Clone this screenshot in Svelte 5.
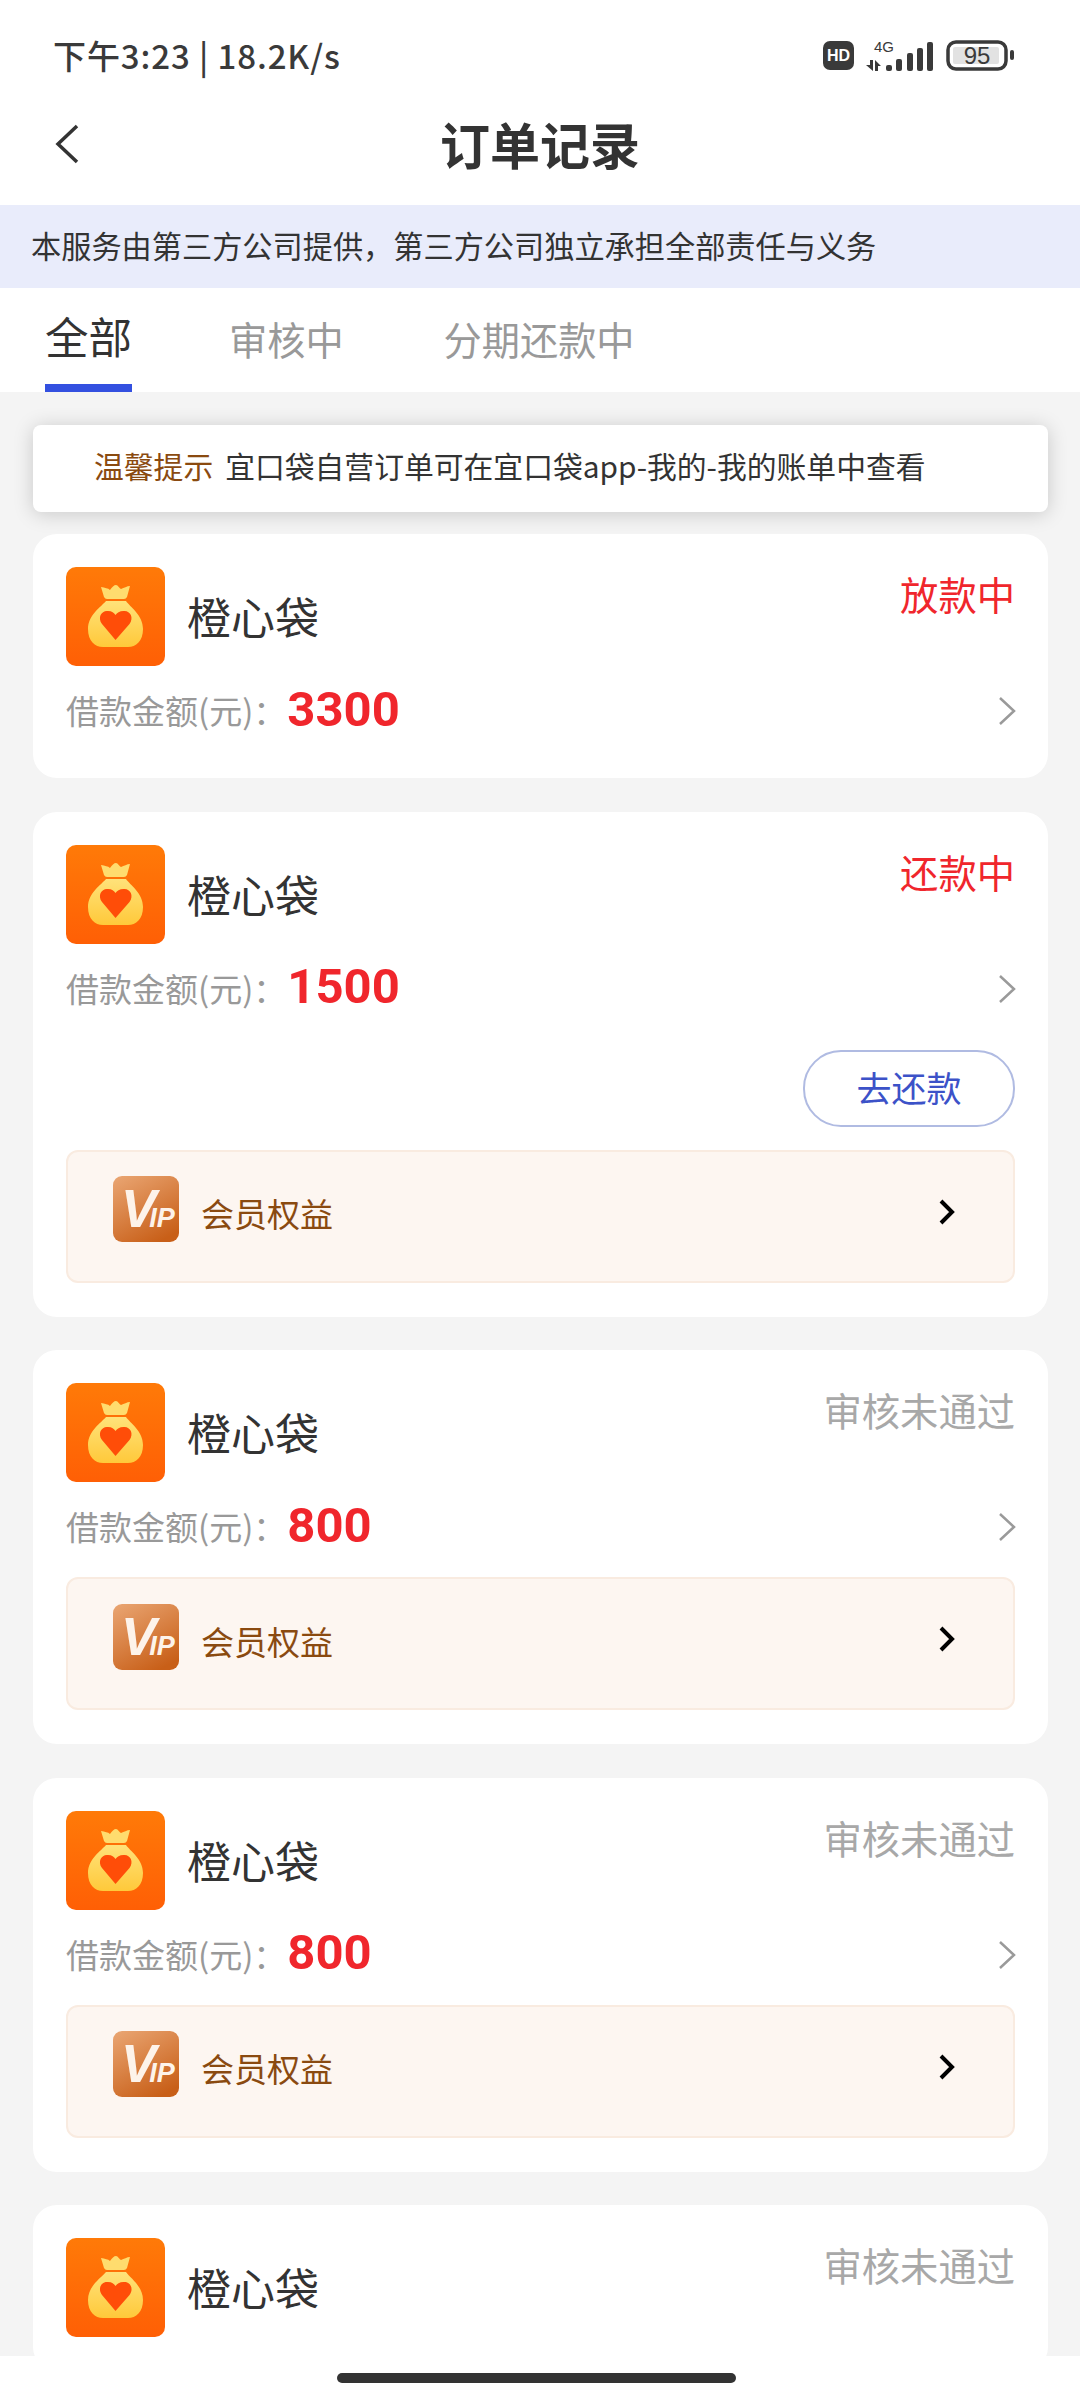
<script lang="ts">
  interface Order {
    status: string;
    amount?: string;
    pending: boolean;
    repay?: boolean;
    vip?: boolean;
  }

  const orders: Order[] = [
    { status: '放款中', amount: '3300', pending: true },
    { status: '还款中', amount: '1500', pending: true, repay: true, vip: true },
    { status: '审核未通过', amount: '800', pending: false, vip: true },
    { status: '审核未通过', amount: '800', pending: false, vip: true },
    { status: '审核未通过', pending: false },
  ];

  const tabs = ['全部', '审核中', '分期还款中'];
  const signalBars = [
    { x: 20, y: 26, h: 6 },
    { x: 30, y: 20, h: 12 },
    { x: 41, y: 14, h: 18 },
    { x: 51, y: 9, h: 23 },
    { x: 61, y: 3, h: 29 },
  ];
</script>

<div class="page">
  <header class="statusbar">
    <span class="clock">下午3:23 | 18.2K/s</span>
    <div class="status-icons">
      <svg width="31" height="29" viewBox="0 0 31 29">
        <rect width="31" height="29" rx="7" fill="#3a3a3a" />
        <text x="15.500" y="20" text-anchor="middle" class="hd">HD</text>
      </svg>
      <svg width="68" height="32" viewBox="0 0 68 32">
        <text x="18" y="13" text-anchor="middle" class="net">4G</text>
        <path d="M4 21h3v11L0 26h4zM9 21l6 6h-3v5H9z" fill="#3a3a3a" />
        {#each signalBars as b}
          <rect x={b.x} y={b.y} width="6" height={b.h} rx="2" fill="#3a3a3a" />
        {/each}
      </svg>
      <svg width="68" height="31" viewBox="0 0 68 31">
        <rect x="2" y="2" width="58" height="27" rx="8" fill="none" stroke="#3a3a3a" stroke-width="3.500" />
        <rect x="7" y="7" width="46" height="17" rx="2" fill="#e2e2e2" />
        <text x="31" y="24" text-anchor="middle" class="batt">95</text>
        <rect x="64" y="10" width="4" height="10" rx="2" fill="#3a3a3a" />
      </svg>
    </div>
  </header>

  <nav class="navbar">
    <svg class="back" width="26" height="40" viewBox="0 0 26 40">
      <path d="M23 2 4 20l19 18" fill="none" stroke="#333" stroke-width="3.500" />
    </svg>
    <h1>订单记录</h1>
  </nav>

  <div class="notice">本服务由第三方公司提供，第三方公司独立承担全部责任与义务</div>

  <div class="tabs">
    {#each tabs as tab, i}
      <div class="tab" class:active={i === 0}>{tab}</div>
    {/each}
  </div>

  <main class="list">
    <div class="tip">
      <span class="tip-label">温馨提示</span>
      <span>宜口袋自营订单可在宜口袋app-我的-我的账单中查看</span>
    </div>

    {#each orders as order}
      <section class="card">
        <div class="card-head">
          <svg class="logo" width="99" height="99" viewBox="0 0 99 99">
            <defs>
              <linearGradient id="logoBg" x1="0" y1="0" x2="0" y2="1">
                <stop offset="0" stop-color="#ff7a08" />
                <stop offset="1" stop-color="#ff5f05" />
              </linearGradient>
              <linearGradient id="bag" x1="0" y1="0" x2="0" y2="1">
                <stop offset="0" stop-color="#ffe27a" />
                <stop offset="1" stop-color="#ffc93a" />
              </linearGradient>
            </defs>
            <rect width="99" height="99" rx="10" fill="url(#logoBg)" />
            <path d="M35 20c4 1 7 1 9 3 2-3 4-5 6-5 2 0 3 3 5 4 3-1 6-3 9-3l-3 11q-1 2-3 2H41q-2 0-3-2z" fill="#ffdc6e" />
            <path d="M40 34h20c4 6 17 14 17 28 0 12-7 18-15 18H37c-8 0-15-6-15-18 0-14 13-22 18-28z" fill="url(#bag)" />
            <path d="M49.500 73 36 57c-5-7 0-14 6-13 4 0 6 2 7.500 4 1.500-2 4-4 8-4 6-1 11 6 6 13z" fill="#ff4d08" />
          </svg>
          <span class="name">橙心袋</span>
          <span class="status" class:pending={order.pending}>{order.status}</span>
        </div>

        {#if order.amount}
          <div class="amount-row">
            <span class="amount-label">借款金额(元)：</span>
            <span class="amount">{order.amount}</span>
            <svg class="more" width="20" height="30" viewBox="0 0 20 30">
              <path d="m3 2 14 13L3 28" fill="none" stroke="#9a9a9a" stroke-width="2.500" />
            </svg>
          </div>
        {/if}

        {#if order.repay}
          <div class="actions"><button class="repay">去还款</button></div>
        {/if}

        {#if order.vip}
          <div class="vip" class:after-button={order.repay}>
            <svg width="66" height="66" viewBox="0 0 66 66">
              <defs>
                <linearGradient id="vipBg" x1="0.150" y1="0" x2="0.700" y2="1">
                  <stop offset="0" stop-color="#e8a26e" />
                  <stop offset="1" stop-color="#c85f18" />
                </linearGradient>
              </defs>
              <rect width="66" height="66" rx="9" fill="url(#vipBg)" />
              <text x="8" y="51" class="vip-logo"><tspan class="vip-v">V</tspan><tspan dx="-7" class="vip-ip">IP</tspan></text>
            </svg>
            <span class="vip-text">会员权益</span>
            <svg class="vip-more" width="18" height="26" viewBox="0 0 18 26">
              <path d="m3 2 11 11L3 24" fill="none" stroke="#000" stroke-width="4" />
            </svg>
          </div>
        {/if}
      </section>
    {/each}
  </main>

  <footer class="homebar"><div class="handle"></div></footer>
</div>

<style>
  :global(body) {
    margin: 0;
  }
  .page {
    width: 1080px;
    height: 2400px;
    display: flex;
    flex-direction: column;
    overflow: hidden;
    background: #fff;
    font-family: "Noto Sans CJK SC", "Noto Sans", sans-serif;
    color: #333;
  }
  .statusbar {
    height: 90px;
    flex: none;
    display: flex;
    align-items: center;
    justify-content: space-between;
    padding: 20px 66px 0 53px;
    box-sizing: border-box;
  }
  .clock {
    font-size: 33px;
    font-weight: 500;
    color: #3a3a3a;
    letter-spacing: 0.900px;
  }
  .status-icons {
    display: flex;
    align-items: center;
    gap: 12px;
  }
  .hd {
    font: 800 16px "Liberation Sans", sans-serif;
    fill: #fff;
  }
  .net {
    font: 400 15px "Liberation Sans", sans-serif;
    fill: #3a3a3a;
  }
  .batt {
    font: 400 24px "Liberation Sans", sans-serif;
    fill: #3a3a3a;
  }
  .navbar {
    height: 115px;
    flex: none;
    display: flex;
    align-items: center;
    justify-content: center;
    position: relative;
  }
  .back {
    position: absolute;
    left: 54px;
    top: 34px;
  }
  h1 {
    margin: 0 0 10px;
    font-size: 50px;
    font-weight: 700;
    line-height: 1.2;
    color: #333;
  }
  .notice {
    height: 83px;
    flex: none;
    padding-left: 31px;
    line-height: 81px;
    background: #e9ecfb;
    font-size: 30.200px;
    color: #333;
  }
  .tabs {
    height: 104px;
    flex: none;
    display: flex;
    gap: 100px;
    padding-left: 45px;
    box-sizing: border-box;
  }
  .tab {
    font-size: 38.200px;
    line-height: 102px;
    color: #999;
    height: 104px;
    box-sizing: border-box;
  }
  .tab.active {
    font-size: 43.500px;
    color: #333;
    line-height: 96px;
    border-bottom: 8px solid #3350e0;
    margin-right: -3px;
  }
  .list {
    flex: 1;
    min-height: 0;
    overflow: hidden;
    background: #f4f4f4;
    padding: 33px 32px 0 33px;
    display: flex;
    flex-direction: column;
    gap: 33.500px;
  }
  .tip {
    flex: none;
    height: 87px;
    margin-bottom: -11.500px;
    padding-left: 61px;
    display: flex;
    align-items: center;
    gap: 12px;
    background: #fff;
    border-radius: 8px;
    box-shadow: 0 2px 20px rgba(0, 0, 0, 0.18);
    font-size: 29.800px;
    color: #333;
  }
  .tip > span {
    margin-top: -8px;
  }
  .tip-label {
    color: #8a4a10;
  }
  .card {
    flex: none;
    background: #fff;
    border-radius: 24px;
    padding: 33px 33px 34px;
  }
  .card-head {
    display: flex;
    align-items: flex-start;
    height: 99px;
  }
  .logo {
    flex: none;
  }
  .name {
    margin: 19px 0 0 22px;
    font-size: 44px;
    line-height: 60px;
    color: #333;
  }
  .status {
    margin: 0 0 0 auto;
    font-size: 38.300px;
    line-height: 54px;
    color: #a8a8a8;
  }
  .status.pending {
    color: #f0262c;
  }
  .amount-row {
    height: 68px;
    margin-top: 10px;
    display: flex;
    align-items: center;
  }
  .amount-label {
    font-size: 33px;
    color: #999;
  }
  .amount {
    margin: -2px 0 0 1px;
    font-family: Roboto, sans-serif;
    font-size: 49px;
    font-weight: 700;
    color: #f0262c;
  }
  .more {
    margin: 2px -2px 0 auto;
  }
  .actions {
    display: flex;
    justify-content: flex-end;
    margin-top: 28px;
  }
  .repay {
    width: 212px;
    height: 77px;
    padding: 0 0 4px;
    background: #fff;
    border: 2px solid #b0bbe2;
    border-radius: 38px;
    font: inherit;
    font-size: 35px;
    color: #3c52c8;
  }
  .vip {
    height: 133px;
    margin-top: 17px;
    padding: 0 57px 0 45px;
    display: flex;
    align-items: center;
    box-sizing: border-box;
    background: #fdf6f1;
    border: 2px solid #f9ebe0;
    border-radius: 12px;
  }
  .vip.after-button {
    margin-top: 23px;
  }
  .vip > svg:first-child {
    margin-top: -14px;
  }
  .vip-logo {
    font-family: "Liberation Sans", sans-serif;
    font-style: italic;
    font-weight: 700;
    fill: #fdf3ea;
  }
  .vip-v {
    font-size: 53px;
  }
  .vip-ip {
    font-size: 27px;
  }
  .vip-text {
    margin: -6px 0 0 22px;
    font-size: 33px;
    color: #8a4a10;
  }
  .vip-more {
    margin-left: auto;
    margin-top: -9px;
  }
  .homebar {
    height: 44px;
    flex: none;
    display: flex;
    justify-content: center;
    padding: 17px 7px 0 0;
    box-sizing: border-box;
    background: #fff;
  }
  .handle {
    width: 399px;
    height: 10px;
    border-radius: 5px;
    background: #333;
  }
</style>
